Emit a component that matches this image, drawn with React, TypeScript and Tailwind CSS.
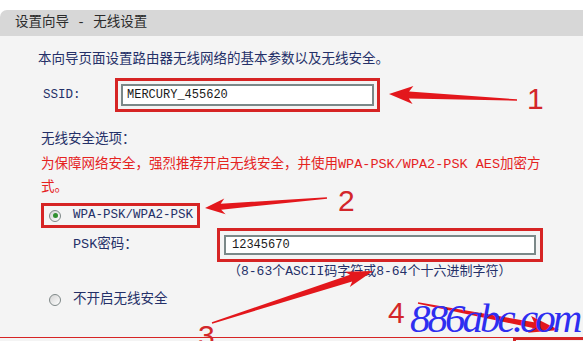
type Pt = [number, number];

// red hand-drawn annotation arrow: long thin tail, barbed head at the tip
const arrowPoints = (tail: Pt, tip: Pt, head: number, half: number, neck: number, end: number) => {
  const dx = tip[0] - tail[0];
  const dy = tip[1] - tail[1];
  const len = Math.hypot(dx, dy);
  const ux = dx / len;
  const uy = dy / len;
  const nx = -uy;
  const ny = ux;
  const hx = tip[0] - ux * head;
  const hy = tip[1] - uy * head;
  const pts: Pt[] = [
    tip,
    [hx + nx * half, hy + ny * half],
    [hx + ux * 4 + nx * neck, hy + uy * 4 + ny * neck],
    [tail[0] + nx * end, tail[1] + ny * end],
    [tail[0] - nx * end, tail[1] - ny * end],
    [hx + ux * 4 - nx * neck, hy + uy * 4 - ny * neck],
    [hx - nx * half, hy - ny * half],
  ];
  return pts.map((p) => `${p[0].toFixed(1)},${p[1].toFixed(1)}`).join(' ');
};

const arrows: { tail: Pt; tip: Pt; head: number; half: number; neck: number }[] = [
  { tail: [517, 100], tip: [389, 94], head: 24, half: 9, neck: 3.5 },
  { tail: [327, 198], tip: [205, 208], head: 20, half: 8, neck: 3 },
  { tail: [212, 323], tip: [373, 271], head: 27, half: 8, neck: 3.5 },
  { tail: [418, 303], tip: [559, 330], head: 30, half: 8.5, neck: 3 },
];

const Radio = ({ checked }: { checked?: boolean }) => (
  <span className="flex h-[12px] w-[12px] shrink-0 items-center justify-center rounded-full border border-[#7f8888] bg-gradient-to-br from-[#d4d4d4] to-white">
    {checked && <span className="h-[5px] w-[5px] rounded-full bg-[#2f8f2f]" />}
  </span>
);

export default function App() {
  return (
    <div className="relative h-[341px] w-[583px] overflow-hidden bg-white font-['Liberation_Mono','Noto_Sans_CJK_SC',monospace] text-[13.5px]">
      <div className="mt-[10px] flex h-[26px] items-center rounded-tl-[7px] bg-[#d7d7d7] pl-[15px] text-[#2b2b2b]">
        设置向导 - 无线设置
      </div>

      <div className="flex h-[305px] flex-col bg-[#f4f4f4]">
        <div className="pl-[41px] text-[#243068]">
          <p className="-ml-[3px] pt-[14px] leading-[20px]">本向导页面设置路由器无线网络的基本参数以及无线安全。</p>

          <div className="mt-[8px] flex h-[34px] items-center">
            <span className="w-[74px] pl-[2px] text-[12.5px]">SSID:</span>
            <div className="h-[34px] w-[265px] border-[3px] border-[#d62424] p-[3px]">
              <div className="h-full border-2 border-[#7b8888] bg-white pl-[4px] text-[12px] leading-[18px] text-[#1a1a1a]">
                MERCURY_455620
              </div>
            </div>
          </div>

          <p className="mt-[18px] leading-[20px]">无线安全选项：</p>
          <p className="mt-[3px] leading-[23px] text-[#e5231f]">
            为保障网络安全，强烈推荐开启无线安全，并使用WPA-PSK/WPA2-PSK AES加密方
            <br />
            式。
          </p>

          <div className="mt-[4px] flex h-[25px] w-[159px] items-center overflow-hidden border-[3px] border-[#d62424]">
            <span className="ml-[5px]">
              <Radio checked />
            </span>
            <span className="ml-[12px] whitespace-nowrap text-[12.5px] leading-none">WPA-PSK/WPA2-PSK</span>
          </div>

          <div className="flex h-[34px] items-center">
            <span className="ml-[32px] w-[144px]">PSK密码：</span>
            <div className="h-[34px] w-[326px] border-[3px] border-[#d62424] p-[4px]">
              <div className="h-full border-2 border-[#7b8888] bg-white pl-[6px] text-[12px] leading-[16px] text-[#1a1a1a]">
                12345670
              </div>
            </div>
          </div>

          <p className="ml-[187px] text-[13px] leading-[20px]">（8-63个ASCII码字符或8-64个十六进制字符）</p>

          <div className="mt-[8px] flex h-[20px] items-center">
            <span className="ml-[8px]">
              <Radio />
            </span>
            <span className="ml-[12px]">不开启无线安全</span>
          </div>
        </div>

        <div className="mt-auto flex h-[4px]">
          <div className="flex-1 border-t border-[#d62424]" />
          <div className="h-full w-[70px] border-l-[3px] border-t-[3px] border-[#d62424]" />
        </div>
      </div>

      <svg className="pointer-events-none absolute inset-0" width={583} height={341}>
        {arrows.map((a, i) => (
          <polygon key={i} points={arrowPoints(a.tail, a.tip, a.head, a.half, a.neck, 0.7)} fill="#e3171c" />
        ))}
      </svg>

      <span className="absolute left-[527px] top-[84px] font-['Liberation_Sans',sans-serif] text-[30px] leading-none text-[#d3262a]">1</span>
      <span className="absolute left-[338px] top-[186px] font-['Liberation_Sans',sans-serif] text-[30px] leading-none text-[#d3262a]">2</span>
      <span className="absolute left-[198px] top-[321px] font-['Liberation_Sans',sans-serif] text-[30px] leading-none text-[#d3262a]">3</span>
      <span className="absolute left-[388px] top-[298px] font-['Liberation_Sans',sans-serif] text-[30px] leading-none text-[#d3262a]">4</span>

      <span className="absolute left-[410px] top-[298px] font-['Liberation_Serif',serif] text-[41px] italic leading-none tracking-[-3px] text-[#2e2ef0]">
        886abc.com
      </span>
    </div>
  );
}
